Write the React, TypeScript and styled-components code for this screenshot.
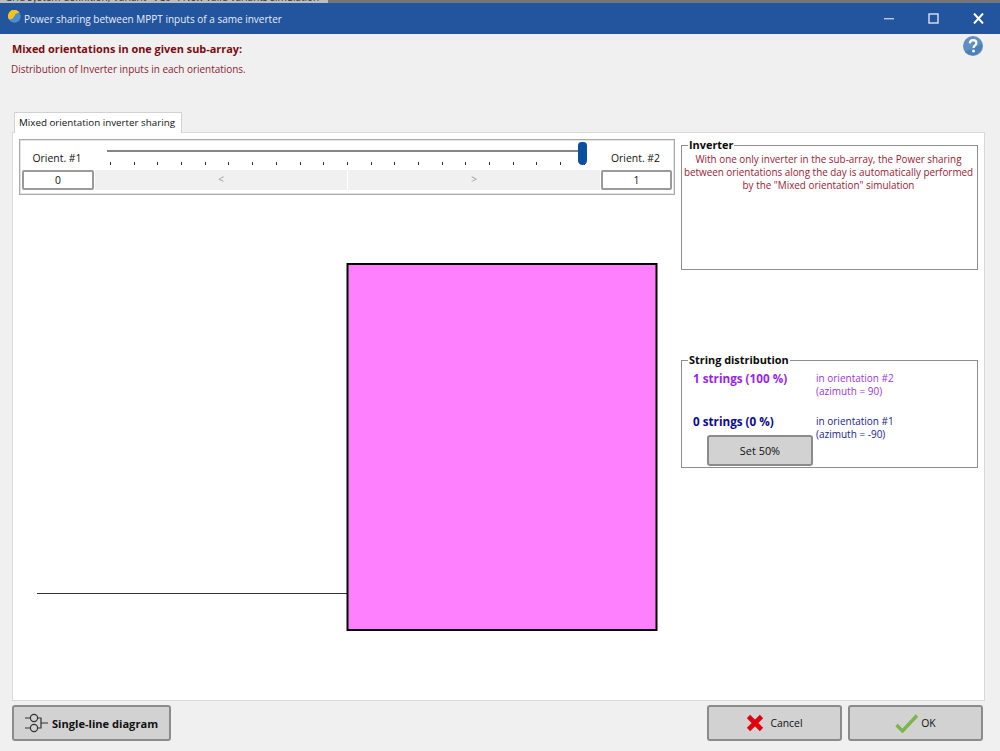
import styled, { createGlobalStyle } from 'styled-components'

const GlobalStyle = createGlobalStyle`
  html, body {
    margin: 0;
    padding: 0;
    background: #f0f0f0;
  }

  body {
    font-family: "Open Sans", "Liberation Sans", sans-serif;
    font-size: 10px;
    color: #111;
  }

  * {
    box-sizing: border-box;
  }
`

const Window = styled.div`
  width: 1000px;
  height: 751px;
  overflow: hidden;
  display: flex;
  flex-direction: column;
  background: #f0f0f0;
`

const BehindStrip = styled.div`
  height: 3px;
  flex: none;
  overflow: hidden;
  background: #757575;
`

const BehindText = styled.div`
  width: 328px;
  height: 3px;
  overflow: hidden;
  padding-left: 5px;
  background: #bdbdbd;
  color: #333;
  font-size: 10px;
  line-height: 12px;
  white-space: nowrap;

  & > span {
    display: block;
    margin-top: -9px;
  }
`

const TitleBar = styled.header`
  height: 31px;
  flex: none;
  display: flex;
  align-items: center;
  padding: 0 16px 0 8px;
  background: #23549e;
  color: #e8eef7;
`

const TitleIcon = styled.svg`
  flex: none;
  margin-top: -4px;
`

const TitleText = styled.span`
  margin-left: 3px;
  margin-top: 1px;
  flex: 1;
  font-size: 10px;
`

const WindowButtons = styled.div`
  display: flex;
  align-items: center;
  gap: 34px;
`

const Intro = styled.div`
  height: 78px;
  flex: none;
  position: relative;
  padding: 7px 11px 0;
`

const IntroTitle = styled.h1`
  margin: 0 0 0 1px;
  font-size: 10.9px;
  line-height: 15px;
  font-weight: 700;
  color: #7d0c12;
`

const IntroText = styled.p`
  margin: 6px 0 0;
  font-size: 9.95px;
  line-height: 15px;
  color: #8a1c34;
`

const HelpIcon = styled.svg`
  position: absolute;
  top: 2px;
  right: 17px;
`

const TabRow = styled.div`
  height: 20px;
  flex: none;
  padding-left: 14px;
  display: flex;
`

const Tab = styled.div`
  width: 168px;
  height: 21px;
  position: relative;
  z-index: 1;
  background: #fff;
  border: 1px solid #d2d2d2;
  border-bottom: none;
  padding-left: 4px;
  font-size: 9.8px;
  line-height: 19px;
  white-space: nowrap;
`

const Panel = styled.section`
  height: 569px;
  flex: none;
  margin: 0 15px 0 12px;
  background: #fff;
  border: 1px solid #d9d9d9;
  padding: 6px 6px 0 6px;
  display: grid;
  grid-template-columns: 656px 297px;
  column-gap: 6px;
`

const LeftColumn = styled.div`
  display: flex;
  flex-direction: column;
`

const SliderBox = styled.div`
  height: 56px;
  border: 1px solid #a9a9a9;
  box-shadow: inset 0 0 0 1px #e4e4e4;
  padding: 0 2px;
  display: grid;
  grid-template-columns: 72px 1fr 71px;
  grid-template-rows: 30px 20px;
`

const OrientLabel = styled.div`
  padding-top: 11px;
  padding-right: 2px;
  text-align: center;
  font-size: 10.4px;
  line-height: 15px;
`

const SliderTrack = styled.div`
  position: relative;
  margin: 0 15px 0 13px;
  padding-top: 10px;
`

const TrackLine = styled.div`
  height: 2px;
  background: #858585;
`

const Ticks = styled.div`
  display: flex;
  justify-content: space-between;
  margin: 10px 1px 0 3px;
`

const Tick = styled.i`
  width: 1px;
  height: 3px;
  background: #333;
`

const Thumb = styled.div`
  position: absolute;
  top: 2px;
  right: -1px;
  width: 9px;
  height: 23px;
  background: #0b4f9f;
  border-radius: 4px 4px 5px 5px;
`

const ValueBox = styled.div`
  height: 20px;
  background: #fff;
  border: 2px solid #9a9a9a;
  border-radius: 2px;
  text-align: center;
  font-size: 10.4px;
  line-height: 16px;
`

const ScrollArea = styled.div`
  display: grid;
  grid-template-columns: 1fr 1fr;
  column-gap: 1px;
  height: 20px;
  margin: 0 1px;
`

const ScrollHalf = styled.div`
  background: #f0f0f0;
  color: #9a9a9a;
  text-align: center;
  font-size: 10px;
  line-height: 18px;
`

const Diagram = styled.svg`
  display: block;
`

const RightColumn = styled.div`
  display: flex;
  flex-direction: column;
`

const Group = styled.fieldset<{ $height: number; $top: number }>`
  margin: ${p => p.$top}px 0 0;
  height: ${p => p.$height}px;
  min-width: 0;
  padding: 0;
  border: 1px solid #8e8e8e;
`

const GroupTitle = styled.legend`
  margin-left: 6px;
  padding: 0 1px;
  font-size: 10.9px;
  line-height: 12px;
  font-weight: 700;
  color: #0a0a0a;
`

const InverterNote = styled.p`
  margin: 2px -1px 0 -3px;
  text-align: center;
  font-size: 9.9px;
  line-height: 13px;
  color: #97233a;
  white-space: nowrap;
`

const DistributionGrid = styled.div`
  display: grid;
  grid-template-columns: 123px 1fr;
  grid-template-rows: 43px 1fr;
  padding: 6px 0 0 11px;
`

const StringCount = styled.div<{ $color: string }>`
  font-size: 11.7px;
  line-height: 13px;
  font-weight: 700;
  white-space: nowrap;
  color: ${p => p.$color};
`

const OrientNote = styled.div<{ $color: string }>`
  font-size: 10px;
  line-height: 13px;
  color: ${p => p.$color};
`

const GrayButton = styled.button`
  display: flex;
  align-items: center;
  justify-content: center;
  padding: 0;
  background: #d2d2d2;
  border: 2px solid #8b8b8b;
  border-radius: 3px;
  color: #111;
  font-family: inherit;
  font-size: 10.4px;
`

const SetButton = styled(GrayButton)`
  width: 106px;
  height: 31px;
  margin: 7px 0 0 14px;
  font-size: 10.9px;
`

const Footer = styled.footer`
  flex: 1;
  padding: 4px 17px 0 12px;
  display: flex;
  align-items: flex-start;
  justify-content: space-between;
`

const FooterRight = styled.div`
  display: flex;
  gap: 6px;
`

const DiagramButton = styled(GrayButton)`
  width: 159px;
  height: 36px;
  gap: 3px;
  font-weight: 700;
  font-size: 11.1px;
`

const ActionButton = styled(GrayButton)<{ $gap: number }>`
  width: 135px;
  height: 36px;
  gap: ${p => p.$gap}px;
`

const ticks = Array.from({ length: 21 }, (_, i) => i)

export default function App() {
  return (
    <Window>
      <GlobalStyle />
      <BehindStrip>
        <BehindText><span>Grid system definition, Variant "VC0" : New valid variants simulation</span></BehindText>
      </BehindStrip>
      <TitleBar>
        <TitleIcon width="13" height="13" viewBox="0 0 13 13">
          <circle cx="6.5" cy="6.5" r="6.2" fill="#4a8ed0" />
          <path d="M1 9.5 A6.2 6.2 0 0 1 11.5 2.5 Q7 3 6.5 6 Q5 9.5 1 9.5 Z" fill="#f7c21a" />
        </TitleIcon>
        <TitleText>Power sharing between MPPT inputs of a same inverter</TitleText>
        <WindowButtons>
          <svg width="10" height="2" viewBox="0 0 10 2">
            <rect width="10" height="1.4" fill="#b9cbe4" />
          </svg>
          <svg width="11" height="11" viewBox="0 0 11 11">
            <rect x="1" y="1" width="9" height="9" fill="none" stroke="#dbe5f2" strokeWidth="1.4" />
          </svg>
          <svg width="11" height="11" viewBox="0 0 11 11">
            <path d="M1 .5 L10 10.5 M10 .5 L1 10.5" stroke="#fff" strokeWidth="2" />
          </svg>
        </WindowButtons>
      </TitleBar>

      <Intro>
        <IntroTitle>Mixed orientations in one given sub-array:</IntroTitle>
        <IntroText>Distribution of Inverter inputs in each orientations.</IntroText>
        <HelpIcon width="20" height="20" viewBox="0 0 20 20">
          <circle cx="10" cy="10" r="10" fill="#5f90c4" />
          <path d="M2 15 Q10 14 19 7 A10 10 0 0 1 2 16 Z" fill="#4f7fb4" />
          <path d="M6.8 7.4 Q7 4.2 10.2 4.2 Q13.4 4.3 13.4 7 Q13.4 8.6 11.6 9.7 Q10.6 10.4 10.6 12" fill="none" stroke="#fff" strokeWidth="2.2" />
          <circle cx="10.5" cy="15" r="1.5" fill="#fff" />
        </HelpIcon>
      </Intro>

      <TabRow>
        <Tab>Mixed orientation inverter sharing</Tab>
      </TabRow>

      <Panel>
        <LeftColumn>
          <SliderBox>
            <OrientLabel>Orient. #1</OrientLabel>
            <SliderTrack>
              <TrackLine />
              <Ticks>
                {ticks.map(i => <Tick key={i} />)}
              </Ticks>
              <Thumb />
            </SliderTrack>
            <OrientLabel>Orient. #2</OrientLabel>
            <ValueBox>0</ValueBox>
            <ScrollArea>
              <ScrollHalf>&lt;</ScrollHalf>
              <ScrollHalf>&gt;</ScrollHalf>
            </ScrollArea>
            <ValueBox>1</ValueBox>
          </SliderBox>
          <Diagram width="656" height="450" viewBox="0 0 656 450">
            <path d="M18 398.5 H328" stroke="#333" strokeWidth="1" />
            <rect x="328.5" y="69" width="309" height="366" fill="#ff80ff" stroke="#000" strokeWidth="2" />
          </Diagram>
        </LeftColumn>

        <RightColumn>
          <Group $height={131} $top={0}>
            <GroupTitle>Inverter</GroupTitle>
            <InverterNote>
              With one only inverter in the sub-array, the Power sharing<br />
              between orientations along the day is automatically performed<br />
              by the "Mixed orientation" simulation
            </InverterNote>
          </Group>
          <Group $height={114} $top={84}>
            <GroupTitle>String distribution</GroupTitle>
            <DistributionGrid>
              <StringCount $color="#9a1ff0">1 strings (100 %)</StringCount>
              <OrientNote $color="#9a35e8">in orientation #2<br />(azimuth = 90)</OrientNote>
              <div>
                <StringCount $color="#0a0a90">0 strings (0 %)</StringCount>
                <SetButton>Set 50%</SetButton>
              </div>
              <OrientNote $color="#1a1a9a">in orientation #1<br />(azimuth = -90)</OrientNote>
            </DistributionGrid>
          </Group>
        </RightColumn>
      </Panel>

      <Footer>
        <DiagramButton>
          <svg width="24" height="22" viewBox="0 0 24 22">
            <g fill="none" stroke="#333" strokeWidth="1.2">
              <circle cx="9" cy="6" r="3.6" />
              <circle cx="9" cy="16" r="3.6" />
              <path d="M0 6 H5.4 M0 16 H5.4 M12.6 6 H16 V16 H12.6 M16 11 H23" />
            </g>
          </svg>
          Single-line diagram
        </DiagramButton>
        <FooterRight>
          <ActionButton $gap={6}>
            <svg width="18" height="18" viewBox="0 0 18 18">
              <path d="M2.5 2.5 L15.5 15.5 M15.5 2.5 L2.5 15.5" stroke="#e0000f" strokeWidth="4.6" />
            </svg>
            Cancel
          </ActionButton>
          <ActionButton $gap={3}>
            <svg width="23" height="19" viewBox="0 0 23 19">
              <path d="M1.5 11 L7.5 17 L22 1.5" fill="none" stroke="#7ab648" strokeWidth="3.4" />
            </svg>
            OK
          </ActionButton>
        </FooterRight>
      </Footer>
    </Window>
  )
}
